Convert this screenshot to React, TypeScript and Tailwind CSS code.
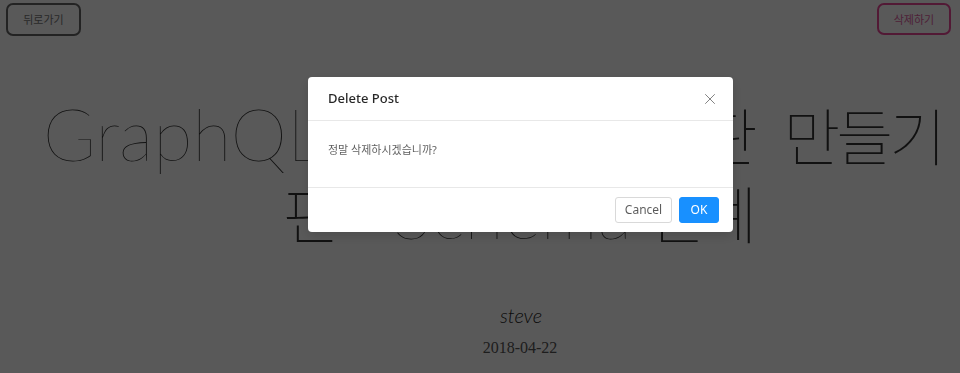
import { X } from "lucide-react";

const latin = "font-['Lato','Noto_Sans_CJK_KR',sans-serif]";
const ko = "text-[62px] leading-[40px] tracking-[-4px]";

export default function App() {
  return (
    <div className="relative min-h-screen bg-white overflow-hidden">
      {/* Page */}
      <div className="flex items-start justify-between pl-[6px] pr-[9px] pt-[3px]">
        <button className="h-[33px] w-[75px] rounded-[7px] border-2 border-[#666] text-[11px] text-[#777] font-['Noto_Sans_CJK_KR',serif]">
          뒤로가기
        </button>
        <button className="h-[32px] w-[74px] rounded-[7px] border-2 border-[#ec4899] text-[11px] text-[#e0609f] font-['Noto_Sans_CJK_KR',serif]">
          삭제하기
        </button>
      </div>

      <h1 className={`mt-[58px] text-center text-[72px] leading-[78px] font-thin text-[#333] ${latin}`}>
        <span className="block whitespace-nowrap pl-[25px] [word-spacing:16px]">
          GraphQL<span className={ko}>로 블로그 게시판 만들기</span>
        </span>
        <span className="block whitespace-nowrap pl-[76px] [word-spacing:-5px]">
          <span className={ko}>편</span> - Schema <span className={ko}>설계</span>
        </span>
      </h1>

      <div className={`mt-[51px] pl-[82px] text-center text-[20px] leading-[28px] italic font-light text-[#222] ${latin}`}>
        steve
      </div>
      <div className="mt-[7px] pl-[80px] text-center text-[16px] leading-[24px] text-[#555] font-['Liberation_Serif',serif]">
        2018-04-22
      </div>

      {/* Mask */}
      <div className="fixed inset-0 bg-black/65" />

      {/* Modal */}
      <div className="fixed left-[308px] top-[77px] w-[425px] rounded-[4px] bg-white shadow-[0_4px_12px_rgba(0,0,0,0.15)] font-['Noto_Sans','Noto_Sans_CJK_KR',sans-serif]">
        <div className="flex h-[44px] items-center justify-between border-b border-[#e8e8e8] pl-[20px] pr-[14px]">
          <span className="text-[13px] font-medium text-black/85">Delete Post</span>
          <X className="h-[18px] w-[18px] text-black/50" strokeWidth={1.3} />
        </div>
        <div className="h-[67px] border-b border-[#e8e8e8] px-[20px] pt-[20px]">
          <p className="text-[11px] leading-[17px] text-black/65">정말 삭제하시겠습니까?</p>
        </div>
        <div className="flex justify-end gap-[7px] px-[14px] py-[9px]">
          <button className="h-[26px] w-[57px] rounded-[3px] border border-[#d9d9d9] bg-white text-[12px] text-black/65">
            Cancel
          </button>
          <button className="h-[26px] w-[40px] rounded-[3px] border border-[#1890ff] bg-[#1890ff] text-[12px] text-white">
            OK
          </button>
        </div>
      </div>
    </div>
  );
}
